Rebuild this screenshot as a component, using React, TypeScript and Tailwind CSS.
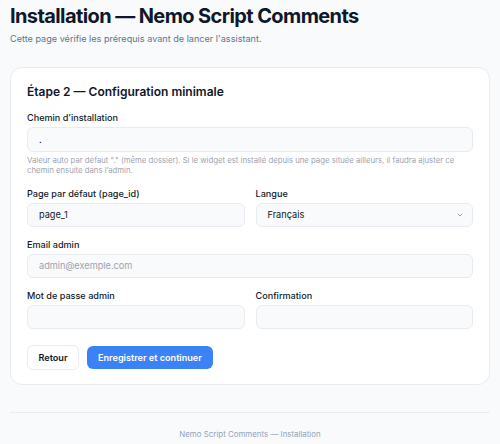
import { ChevronDown } from "lucide-react";

function Label({ children }: { children: React.ReactNode }) {
  return <label className="block text-[9.1px] font-medium text-[#111827] mb-[2px] leading-[14px]">{children}</label>;
}

const inputCls =
  "block w-full h-[24.5px] rounded-[6px] border border-[#e8ebf0] bg-[#f8fafc] px-[11px] text-[9.2px] text-[#111827] placeholder:text-[#9ca3af] outline-none";

export default function App() {
  return (
    <div className="min-h-[444px] bg-[#f8fafc] px-[10px] pt-[2px] font-['Inter',sans-serif] text-[#0f172a]">
      <h1 className="text-[20px] font-bold leading-[28px] tracking-[-0.6px] text-[#0f172a]">
        Installation — Nemo Script Comments
      </h1>
      <p className="mt-[2px] text-[9.1px] leading-[14px] text-[#64748b]">
        Cette page vérifie les prérequis avant de lancer l'assistant.
      </p>

      <div className="mt-[21px] rounded-[12px] border border-[#e8ebf0] bg-white px-[16px] pt-[16px] pb-[14px]">
        <h2 className="text-[12px] font-semibold leading-[16px] text-[#0f172a]">Étape 2 — Configuration minimale</h2>

        <div className="mt-[11px]">
          <Label>Chemin d’installation</Label>
          <input className={inputCls} defaultValue="." />
          <p className="mt-[3.5px] text-[7.75px] leading-[10px] text-[#9ca3af]">
            Valeur auto par défaut "." (même dossier). Si le widget est installé depuis une page située ailleurs, il faudra ajuster ce chemin ensuite dans l’admin.
          </p>
        </div>

        <div className="mt-[11.5px] grid grid-cols-2 gap-[11px]">
          <div>
            <Label>Page par défaut (page_id)</Label>
            <input className={inputCls} defaultValue="page_1" />
          </div>
          <div>
            <Label>Langue</Label>
            <div className="relative">
              <div className={inputCls + " flex items-center"}>Français</div>
              <ChevronDown className="absolute right-[9px] top-[8.5px] h-[8px] w-[8px] text-[#6b7280]" strokeWidth={2} />
            </div>
          </div>
        </div>

        <div className="mt-[10.5px]">
          <Label>Email admin</Label>
          <input className={inputCls} placeholder="admin@exemple.com" />
        </div>

        <div className="mt-[10.5px] grid grid-cols-2 gap-[11px]">
          <div>
            <Label>Mot de passe admin</Label>
            <input type="password" className={inputCls} />
          </div>
          <div>
            <Label>Confirmation</Label>
            <input type="password" className={inputCls} />
          </div>
        </div>

        <div className="mt-[16px] flex items-center gap-[8px]">
          <button className="h-[25px] rounded-[6px] border border-[#e8ebf0] bg-white px-[10.5px] text-[9.1px] font-semibold text-[#111827]">
            Retour
          </button>
          <button className="h-[23px] rounded-[6px] bg-[#3b82f6] px-[11px] text-[9.1px] font-semibold text-white">
            Enregistrer et continuer
          </button>
        </div>
      </div>

      <footer className="mt-[27px] border-t border-[#e8ebf0] pt-[15px] text-center text-[7.9px] leading-[12px] text-[#94a3b8]">
        Nemo Script Comments — Installation
      </footer>
    </div>
  );
}
